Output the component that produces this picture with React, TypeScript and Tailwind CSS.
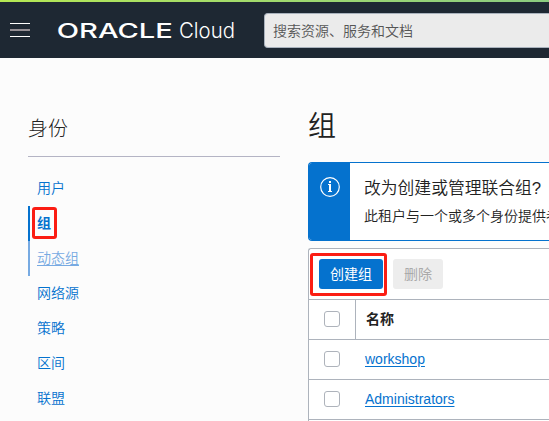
const navItems = [
  { label: '用户', state: 'normal' },
  { label: '组', state: 'active' },
  { label: '动态组', state: 'hover' },
  { label: '网络源', state: 'normal' },
  { label: '策略', state: 'normal' },
  { label: '区间', state: 'normal' },
  { label: '联盟', state: 'normal' },
];

const navStyles: Record<string, string> = {
  normal: 'border-transparent text-[#0572ce] font-[350]',
  active: 'border-[#0572ce] font-bold text-[#0572ce]',
  hover: 'border-[#77aae2] text-[#77aae2] font-[350] underline underline-offset-2',
};

const groups = ['workshop', 'Administrators'];

function Checkbox() {
  return (
    <div className="flex w-[47px] shrink-0 items-start justify-center border-r border-transparent pt-[11px]">
      <span className="h-4 w-4 rounded-[3px] border border-[#aeb3bb] bg-white" />
    </div>
  );
}

function Header() {
  return (
    <header className="h-[58px] bg-[#1e2833]">
      <div className="h-[2px] bg-linear-to-r from-[#b5e853] to-[#8ccb80]" />
      <div className="flex h-[56px] items-start">
        <div className="mt-[21px] ml-[10px] flex w-5 shrink-0 flex-col">
          <span className="h-px bg-white" />
          <span className="mt-[5px] h-[2px] bg-[#958f95]" />
          <span className="mt-[5px] h-px bg-white" />
        </div>
        <svg className="mt-[14px] ml-[26px] h-7 w-[182px] shrink-0" viewBox="56 16 182 28" fill="#fff">
          <text x="56.8" y="37.8" fontSize="20" fontWeight="500" textLength="116" lengthAdjust="spacingAndGlyphs" fontFamily="Inter, sans-serif">ORACLE</text>
          <text x="179" y="38" fontSize="21.5" fontWeight="300" textLength="56" lengthAdjust="spacingAndGlyphs" fontFamily="Inter, sans-serif">Cloud</text>
        </svg>
        <div className="mt-[11px] ml-[26px] flex h-[35px] flex-1 items-center rounded-l border border-r-0 border-[#a9b2bd] bg-[#ebebeb] pl-2 text-sm font-[350] text-[#555]">
          搜索资源、服务和文档
        </div>
      </div>
    </header>
  );
}

function Sidebar() {
  return (
    <aside className="w-[252px] shrink-0 pt-[56px]">
      <h2 className="h-[43px] border-b border-[#b4b4c4] pt-px text-[20px] leading-7 font-light text-[#222]">身份</h2>
      <nav className="pt-[14px]">
        {navItems.map((item) => (
          <a key={item.label} className={`flex h-[35px] items-center border-l-2 pb-[2px] pl-[7px] text-sm ${navStyles[item.state]}`}>
            {item.state === 'active' ? (
              <span className="-ml-[5px] flex h-8 w-[25px] items-center justify-center rounded-[3px] border-3 border-[#fb1d13] pr-px">{item.label}</span>
            ) : (
              item.label
            )}
          </a>
        ))}
      </nav>
    </aside>
  );
}

export default function App() {
  return (
    <div className="h-[421px] w-[549px] overflow-hidden bg-[#fcfcfc] font-['Liberation_Sans','Noto_Sans_CJK_SC',sans-serif]">
      <Header />
      <div className="flex pl-7">
        <Sidebar />
        <main className="ml-7 flex-1 whitespace-nowrap">
          <h1 className="h-[104px] pt-12 text-[28px] leading-[42px] font-[350] text-[#222]">组</h1>
          <section className="flex h-[79px] overflow-hidden rounded-l-[4px] border border-r-0 border-[#0572ce] bg-white">
            <div className="w-[41px] shrink-0 bg-[#0572ce]">
              <svg className="mt-[14px] ml-[11px] h-5 w-5" viewBox="0 0 20 20" fill="none" stroke="#fff">
                <circle cx="10" cy="10" r="9.3" strokeWidth="1.2" />
                <path d="M8 7.5h3M8 14.5h4" strokeWidth="1" />
                <path d="M10 7v8" strokeWidth="2" />
                <path d="M9 5h2" strokeWidth="2" />
              </svg>
            </div>
            <div className="w-0 pl-[14px] text-[#222]">
              <h3 className="mt-[13px] text-[16.8px] leading-[26px] font-[350]">改为创建或管理联合组?</h3>
              <p className="mt-[3px] text-sm leading-[22px] font-[350]">此租户与一个或多个身份提供者</p>
            </div>
          </section>
          <section className="mt-[7px] h-[190px] rounded-tl-[3px] border-t border-l border-[#adb3bc] bg-white">
            <div className="flex h-[51px] items-start border-b border-[#adb3bc] pt-1 pl-px text-sm">
              <div className="flex h-[43px] w-[77px] items-start rounded-[3px] border-3 border-[#fb1d13] pt-[3px] pl-[6px]">
                <button className="h-[30px] w-16 shrink-0 rounded-[3px] bg-[#0572ce] pb-px text-white">创建组</button>
              </div>
              <button className="mt-[6px] ml-[6px] h-[30px] w-[50px] rounded-[3px] bg-[#ededed] text-[#aaa]">删除</button>
            </div>
            <div className="flex h-10 border-b border-[#adb3bc]">
              <div className="flex border-r border-[#adb3bc] [&>div]:w-[46px] [&>div]:border-r-0">
                <Checkbox />
              </div>
              <span className="pl-[10px] text-sm leading-[39px] font-bold text-[#222]">名称</span>
            </div>
            {groups.map((name) => (
              <div key={name} className="flex h-10 border-b border-[#adb3bc]">
                <Checkbox />
                <a className="pl-[9px] text-sm leading-[39px] text-[#0572ce] underline underline-offset-2">{name}</a>
              </div>
            ))}
          </section>
        </main>
      </div>
    </div>
  );
}
